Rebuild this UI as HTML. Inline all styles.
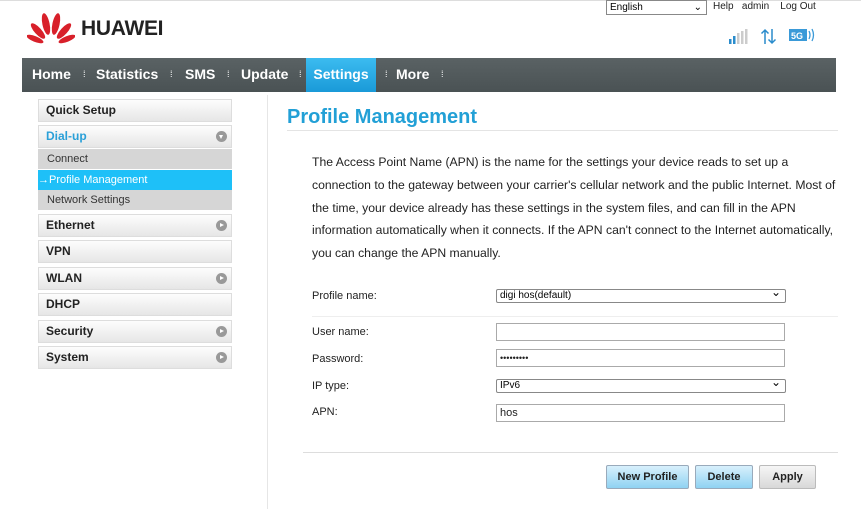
<!DOCTYPE html>
<html><head><style>
body{margin:0;width:861px;height:509px;background:#fff;font-family:"Liberation Sans",sans-serif;position:relative;overflow:hidden}
.a{position:absolute}
.nav{left:22px;top:58px;width:814px;height:34px;background:linear-gradient(#5a6264,#4a5254)}
.nav span{position:absolute;top:0;height:34px;line-height:33px;color:#fff;font-weight:bold;font-size:14px}
.sep{color:#9aa;font-size:9px!important;font-weight:normal!important}
.side{left:38px;width:192px;height:21px;border:1px solid #ddd;background:linear-gradient(#fdfdfd,#e6e6e6);font-weight:bold;font-size:12px;line-height:21px;text-indent:7px;color:#222}
.dot{position:absolute;right:4px;top:5px;width:11px;height:11px;border-radius:50%;background:#999}
.dot:after{content:"";position:absolute;left:4px;top:3px;border-left:4px solid #fff;border-top:2.5px solid transparent;border-bottom:2.5px solid transparent}
.dn:after{left:3px;top:4px;border-top:4px solid #fff;border-left:2.5px solid transparent;border-right:2.5px solid transparent;border-bottom:0}
.sub{left:38px;width:194px;height:20px;background:#d6d6d6;font-size:11px;line-height:20px;color:#333;text-indent:9px}
.lbl{left:312px;font-size:11px;color:#222}
.inp{left:496px;width:287px;height:16px;border:1px solid #aaa;font-size:11px;line-height:16px;text-indent:3px;color:#222;background:#fff}
.sel{left:496px;width:288px;height:12px;border:1px solid #888;border-radius:2px;font-size:10px;line-height:12px;text-indent:3px}
.sel:after{content:"⌄";position:absolute;right:4px;top:-4px;font-size:12px}
.btn{top:465px;height:22px;border:1px solid #9ab;font-size:11px;font-weight:bold;line-height:22px;text-align:center;color:#222;border-radius:2px}
</style></head><body>
<div class="a" style="left:0;top:0;width:861px;height:1px;background:#ddd"></div>
<svg class="a" style="left:27px;top:10px" width="48" height="36" viewBox="0 0 48 36">
<g fill="#d8202a">
<ellipse cx="19" cy="14" rx="3.6" ry="11" transform="rotate(-12 19 14)"/>
<ellipse cx="29" cy="14" rx="3.6" ry="11" transform="rotate(12 29 14)"/>
<ellipse cx="11" cy="21" rx="3.4" ry="10" transform="rotate(-42 11 21)"/>
<ellipse cx="37" cy="21" rx="3.4" ry="10" transform="rotate(42 37 21)"/>
<ellipse cx="8" cy="29" rx="2.8" ry="9" transform="rotate(-68 8 29)"/>
<ellipse cx="40" cy="29" rx="2.8" ry="9" transform="rotate(68 40 29)"/>
</g></svg>
<div class="a" style="left:81px;top:17px;font-size:21px;font-weight:bold;color:#222;letter-spacing:-0.3px">HUAWEI</div>
<div class="a" style="left:606px;top:0;width:99px;height:13px;border:1px solid #888;font-size:10px;line-height:13px;text-indent:3px">English<span style="position:absolute;right:4px">⌄</span></div>
<div class="a" style="left:713px;top:1px;font-size:10px;color:#222">Help&nbsp;&nbsp; admin&nbsp;&nbsp;&nbsp; Log Out</div>
<svg class="a" style="left:728px;top:28px" width="90" height="18">
<rect x="1" y="11" width="2.5" height="5" fill="#2a8ccc"/><rect x="5" y="8" width="2.5" height="8" fill="#2a8ccc"/><rect x="9" y="5" width="2.5" height="11" fill="#ccc"/><rect x="13" y="3" width="2.5" height="13" fill="#ccc"/><rect x="17" y="1" width="2.5" height="15" fill="#ccc"/>
<path d="M37 16V2M33.5 5.5l3.5-3.5 3.5 3.5M44 1v14M40.5 11.5l3.5 3.5 3.5-3.5" stroke="#2a8ccc" fill="none" stroke-width="1.5"/>
<rect x="61" y="1" width="18" height="12" fill="#3a9ad8"/><text x="63" y="11" font-size="9" font-weight="bold" fill="#fff" font-family="Liberation Sans">5G</text>
<path d="M81 3q2 4 0 8M84 1q3 6 0 12" stroke="#3a9ad8" fill="none" stroke-width="1.3"/>
</svg>
<div class="a nav">
<span style="left:10px">Home</span><span class="sep" style="left:61px">⁞</span>
<span style="left:74px">Statistics</span><span class="sep" style="left:148px">⁞</span>
<span style="left:163px">SMS</span><span class="sep" style="left:205px">⁞</span>
<span style="left:219px">Update</span><span class="sep" style="left:277px">⁞</span>
<span style="left:284px;width:70px;background:linear-gradient(#3cbcf0,#1a9ad8);text-align:center">Settings</span><span class="sep" style="left:363px">⁞</span>
<span style="left:374px">More</span><span class="sep" style="left:419px">⁞</span>
</div>
<div class="a side" style="top:99px">Quick Setup</div>
<div class="a side" style="top:125px;color:#2aa0d8">Dial-up<div class="dot dn"></div></div>
<div class="a sub" style="top:149px">Connect</div>
<div class="a sub" style="top:170px;background:#1ec0f8;color:#fff;text-indent:0">→Profile Management</div>
<div class="a sub" style="top:190px">Network Settings</div>
<div class="a side" style="top:214px">Ethernet<div class="dot"></div></div>
<div class="a side" style="top:240px">VPN</div>
<div class="a side" style="top:267px">WLAN<div class="dot"></div></div>
<div class="a side" style="top:293px">DHCP</div>
<div class="a side" style="top:320px">Security<div class="dot"></div></div>
<div class="a side" style="top:346px">System<div class="dot"></div></div>
<div class="a" style="left:267px;top:95px;width:1px;height:414px;background:#e6e6e6"></div>
<div class="a" style="left:287px;top:106px;font-size:20px;font-weight:bold;color:#22a0d6">Profile Management</div>
<div class="a" style="left:287px;top:130px;width:551px;height:1px;background:#e4e4e4"></div>
<div class="a" style="left:312px;top:151px;width:528px;font-size:12.2px;line-height:22.8px;color:#222">The Access Point Name (APN) is the name for the settings your device reads to set up a connection to the gateway between your carrier's cellular network and the public Internet. Most of the time, your device already has these settings in the system files, and can fill in the APN information automatically when it connects. If the APN can't connect to the Internet automatically, you can change the APN manually.</div>
<div class="a lbl" style="top:290px">Profile name:</div>
<div class="a sel" style="top:289px">digi hos(default)</div>
<div class="a" style="left:312px;top:316px;width:526px;height:1px;background:#eee"></div>
<div class="a lbl" style="top:326px">User name:</div>
<div class="a inp" style="top:323px"></div>
<div class="a lbl" style="top:353px">Password:</div>
<div class="a inp" style="top:349px;font-size:9px">•••••••••</div>
<div class="a lbl" style="top:380px">IP type:</div>
<div class="a sel" style="top:379px">IPv6</div>
<div class="a lbl" style="top:406px">APN:</div>
<div class="a inp" style="top:404px">hos</div>
<div class="a" style="left:303px;top:452px;width:535px;height:1px;background:#ddd"></div>
<div class="a btn" style="left:606px;width:81px;background:linear-gradient(#d8f0fc,#8fd2f2)">New Profile</div>
<div class="a btn" style="left:695px;width:56px;background:linear-gradient(#d8f0fc,#8fd2f2)">Delete</div>
<div class="a btn" style="left:759px;width:55px;border-color:#bbb;background:linear-gradient(#f6f6f6,#d8d8d8)">Apply</div>
</body></html>
